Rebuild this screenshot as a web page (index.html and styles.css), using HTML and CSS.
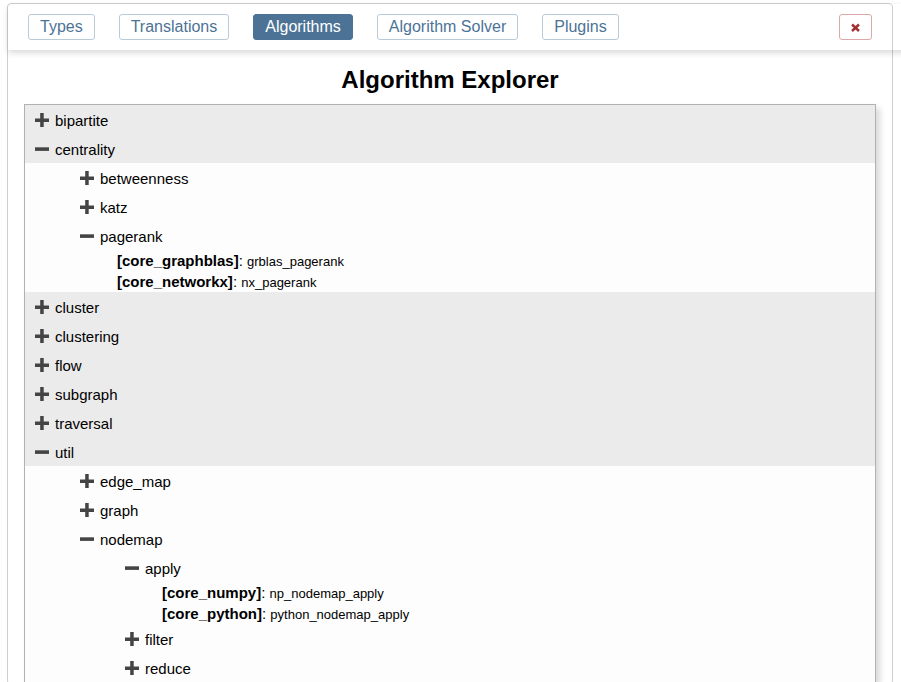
FILE: index.html
```html
<!DOCTYPE html>
<html lang="en">
<head>
<meta charset="utf-8">
<title>Algorithm Explorer</title>
<link rel="stylesheet" href="styles.css">
</head>
<body>
<svg class="defs" aria-hidden="true">
  <symbol id="plus" viewBox="0 0 14 14"><path d="M5.2 0h3.5v5.5H14V9H8.7v5H5.2V9H0V5.5h5.2z"/></symbol>
  <symbol id="minus" viewBox="0 0 14 14"><path d="M0 5.3h14v3.6H0z"/></symbol>
</svg>
<div class="card">
  <header class="bar">
    <nav class="tabs">
      <button class="tab">Types</button>
      <button class="tab">Translations</button>
      <button class="tab active">Algorithms</button>
      <button class="tab">Algorithm Solver</button>
      <button class="tab">Plugins</button>
    </nav>
    <button class="tab close" aria-label="Close"><svg viewBox="0 0 11 11"><path d="M2 2.5l7 6.500M9 2.500l-7 6.500"/></svg></button>
  </header>
  <main class="content">
    <h1>Algorithm Explorer</h1>
    <ul class="tree">
      <li><button class="row"><svg><use href="#plus"/></svg>bipartite</button></li>
      <li><button class="row"><svg><use href="#minus"/></svg>centrality</button>
        <ul class="branch">
          <li><button class="row"><svg><use href="#plus"/></svg>betweenness</button></li>
          <li><button class="row"><svg><use href="#plus"/></svg>katz</button></li>
          <li><button class="row"><svg><use href="#minus"/></svg>pagerank</button>
            <ul class="impls">
              <li><b>[core_graphblas]</b>: <span>grblas_pagerank</span></li>
              <li><b>[core_networkx]</b>: <span>nx_pagerank</span></li>
            </ul>
          </li>
        </ul>
      </li>
      <li><button class="row"><svg><use href="#plus"/></svg>cluster</button></li>
      <li><button class="row"><svg><use href="#plus"/></svg>clustering</button></li>
      <li><button class="row"><svg><use href="#plus"/></svg>flow</button></li>
      <li><button class="row"><svg><use href="#plus"/></svg>subgraph</button></li>
      <li><button class="row"><svg><use href="#plus"/></svg>traversal</button></li>
      <li><button class="row"><svg><use href="#minus"/></svg>util</button>
        <ul class="branch">
          <li><button class="row"><svg><use href="#plus"/></svg>edge_map</button></li>
          <li><button class="row"><svg><use href="#plus"/></svg>graph</button></li>
          <li><button class="row"><svg><use href="#minus"/></svg>nodemap</button>
            <ul class="branch">
              <li><button class="row"><svg><use href="#minus"/></svg>apply</button>
                <ul class="impls">
                  <li><b>[core_numpy]</b>: <span>np_nodemap_apply</span></li>
                  <li><b>[core_python]</b>: <span>python_nodemap_apply</span></li>
                </ul>
              </li>
              <li><button class="row"><svg><use href="#plus"/></svg>filter</button></li>
              <li><button class="row"><svg><use href="#plus"/></svg>reduce</button></li>
            </ul>
          </li>
        </ul>
      </li>
    </ul>
  </main>
</div>
</body>
</html>
```
FILE: styles.css
```css
* { box-sizing: border-box; }

body {
  margin: 0;
  padding: 3px 8px 0 7px;
  height: 100vh;
  overflow: hidden;
  background: #fff;
  color: #000;
  font-family: "Liberation Sans", Arial, sans-serif;
  font-size: 15px;
}

button { font-family: inherit; cursor: pointer; }
ul { list-style: none; margin: 0; padding: 0; }

.defs { display: none; }

.card {
  min-height: 100vh;
  border: 1px solid #cfcfcf;
  border-radius: 4px;
}

.bar {
  display: flex;
  justify-content: space-between;
  margin-right: -16px;
  padding: 10px 36px 10px 20px;
  border-radius: 4px 0 0 0;
  box-shadow: 0 3px 6px rgba(0, 0, 0, 0.15);
}

.tabs { display: flex; gap: 24px; }

.tab {
  height: 26px;
  padding: 0 11px;
  border: 1px solid #b9cad9;
  border-radius: 3px;
  background: #fff;
  color: #4c7396;
  font-size: 16px;
  line-height: 24px;
}

.tab.active {
  background: #4c7396;
  border-color: #4c7396;
  color: #fff;
}

.close {
  display: flex;
  align-items: center;
  padding: 0 10px;
  border-color: #dba9a9;
}

.close svg {
  width: 11px;
  height: 11px;
  margin-top: 1px;
  fill: none;
  stroke: #a33030;
  stroke-width: 2.4;
}

.content { padding: 14px 16px 0; }

h1 {
  margin: 0 0 8px;
  font-size: 24px;
  line-height: 32px;
  text-align: center;
}

.tree {
  border: 1px solid #b0b2b1;
  background: #ebebeb;
  box-shadow: 4px 4px 6px rgba(0, 0, 0, 0.15);
}

.row {
  display: flex;
  align-items: center;
  gap: 6px;
  width: 100%;
  height: 29px;
  padding: 2px 10px 0;
  border: 0;
  background: none;
  color: inherit;
  font-size: 15px;
  text-align: left;
}

.row svg {
  width: 14px;
  height: 14px;
  margin-bottom: 1px;
  fill: #444;
}

.branch {
  padding-left: 45px;
  background: #fdfdfd;
}

.impls {
  padding-left: 47px;
  line-height: 21px;
}

.impls li { height: 21px; }

.impls span { font-size: 13px; }
```
